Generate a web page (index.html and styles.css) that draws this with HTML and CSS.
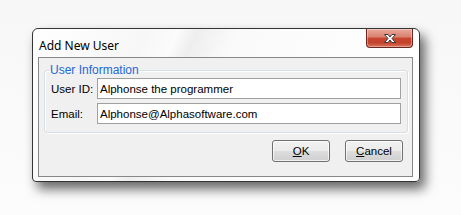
FILE: index.html
```html
<html>

<head>
	<link rel="stylesheet" href="styles.css">
</head>

<body>
	<div class="window">
		<div class="titleBar">
			<span class="title">Add New User</span>
			<div class="closeButton">
				<svg width="14" height="11" viewBox="0 0 14 11">
					<path d="M1.5 1.5 H5 L7 4 L9 1.5 H12.5 L9 5.5 L12.5 9.5 H9 L7 7 L5 9.5 H1.5 L5 5.5 Z" fill="#ffffff" stroke="#3b3b3b" stroke-width="1" stroke-linejoin="round" />
				</svg>
			</div>
		</div>
		<div class="client">
			<fieldset class="groupBox">
				<legend>User Information</legend>
				<div class="field">
					<label for="userId">User ID:</label>
					<input type="text" id="userId" value="Alphonse the programmer" />
				</div>
				<div class="field">
					<label for="email">Email:</label>
					<input type="text" id="email" value="Alphonse@Alphasoftware.com" />
				</div>
			</fieldset>
			<div class="buttons">
				<button type="button" class="dialogButton"><u>O</u>K</button>
				<button type="button" class="dialogButton"><u>C</u>ancel</button>
			</div>
		</div>
	</div>
</body>

</html>
```

FILE: styles.css
```css
body {
	margin: 0;
	padding: 28px 0 0 32px;
	background: linear-gradient(to bottom, #f7f7f7, #fcfcfc);
	font-family: "Liberation Sans", Arial, sans-serif;
	font-size: 11px;
}

.window {
	width: 386px;
	height: 152px;
	border: 1px solid #343434;
	border-radius: 6px 6px 4px 4px;
	background: linear-gradient(115deg, #ffffff 0%, #f7f7f7 25%, #fbfbfb 32%, #eeeeee 36%, #fafafa 45%, #ffffff 100%);
	box-shadow: 5px 7px 12px rgba(0, 0, 0, 0.6);
	display: flex;
	flex-direction: column;
}

.titleBar {
	height: 28px;
	display: flex;
	align-items: flex-start;
	justify-content: space-between;
	padding-left: 6px;
}

.title {
	font-family: "Noto Sans", sans-serif;
	font-size: 12px;
	color: #000;
	margin-top: 8px;
}

.closeButton {
	width: 45px;
	height: 18px;
	margin-right: 6px;
	border: 1px solid #6b2720;
	border-top: none;
	border-radius: 0 0 4px 4px;
	background: linear-gradient(to bottom, #e9a99b 0%, #d9806e 45%, #c8462f 50%, #c4412b 75%, #d8735c 100%);
	display: flex;
	align-items: center;
	justify-content: center;
	box-shadow: inset 0 0 0 1px rgba(255, 255, 255, 0.35);
}

.client {
	flex: 1;
	margin: 0 6px 4px 5px;
	border: 1px solid #878787;
	background: #f0f0f0;
	display: flex;
	flex-direction: column;
}

.groupBox {
	margin: 5px 4px 0 5px;
	padding: 1px 6px 8px 6px;
	border: 1px solid #d5dfe5;
	border-radius: 3px;
	box-shadow: inset 1px 1px 0 #fff, 1px 1px 0 #fff;
	display: flex;
	flex-direction: column;
	gap: 4px;
}

.groupBox legend {
	color: #2366d9;
	font-size: 12px;
	padding: 0 1px;
	margin-left: -2px;
}

.field {
	display: flex;
	align-items: center;
}

.field label {
	width: 46px;
	font-size: 11.5px;
	color: #000;
}

.field input {
	width: 304px;
	height: 21px;
	box-sizing: border-box;
	border: 1px solid #a0a0a0;
	background: #fff;
	font-family: "Liberation Sans", Arial, sans-serif;
	font-size: 11.5px;
	padding: 0 2px;
	color: #000;
}

.buttons {
	display: flex;
	justify-content: flex-end;
	gap: 15px;
	margin: 7px 9px 0 0;
}

.dialogButton {
	width: 58px;
	height: 22px;
	border: 1px solid #707070;
	border-radius: 3px;
	background: linear-gradient(to bottom, #f2f2f2 0%, #ebebeb 48%, #dddddd 52%, #cfcfcf 100%);
	box-shadow: inset 0 0 0 1px rgba(255, 255, 255, 0.7);
	font-family: "Liberation Sans", Arial, sans-serif;
	font-size: 11.5px;
	color: #000;
	padding: 0;
}
```
